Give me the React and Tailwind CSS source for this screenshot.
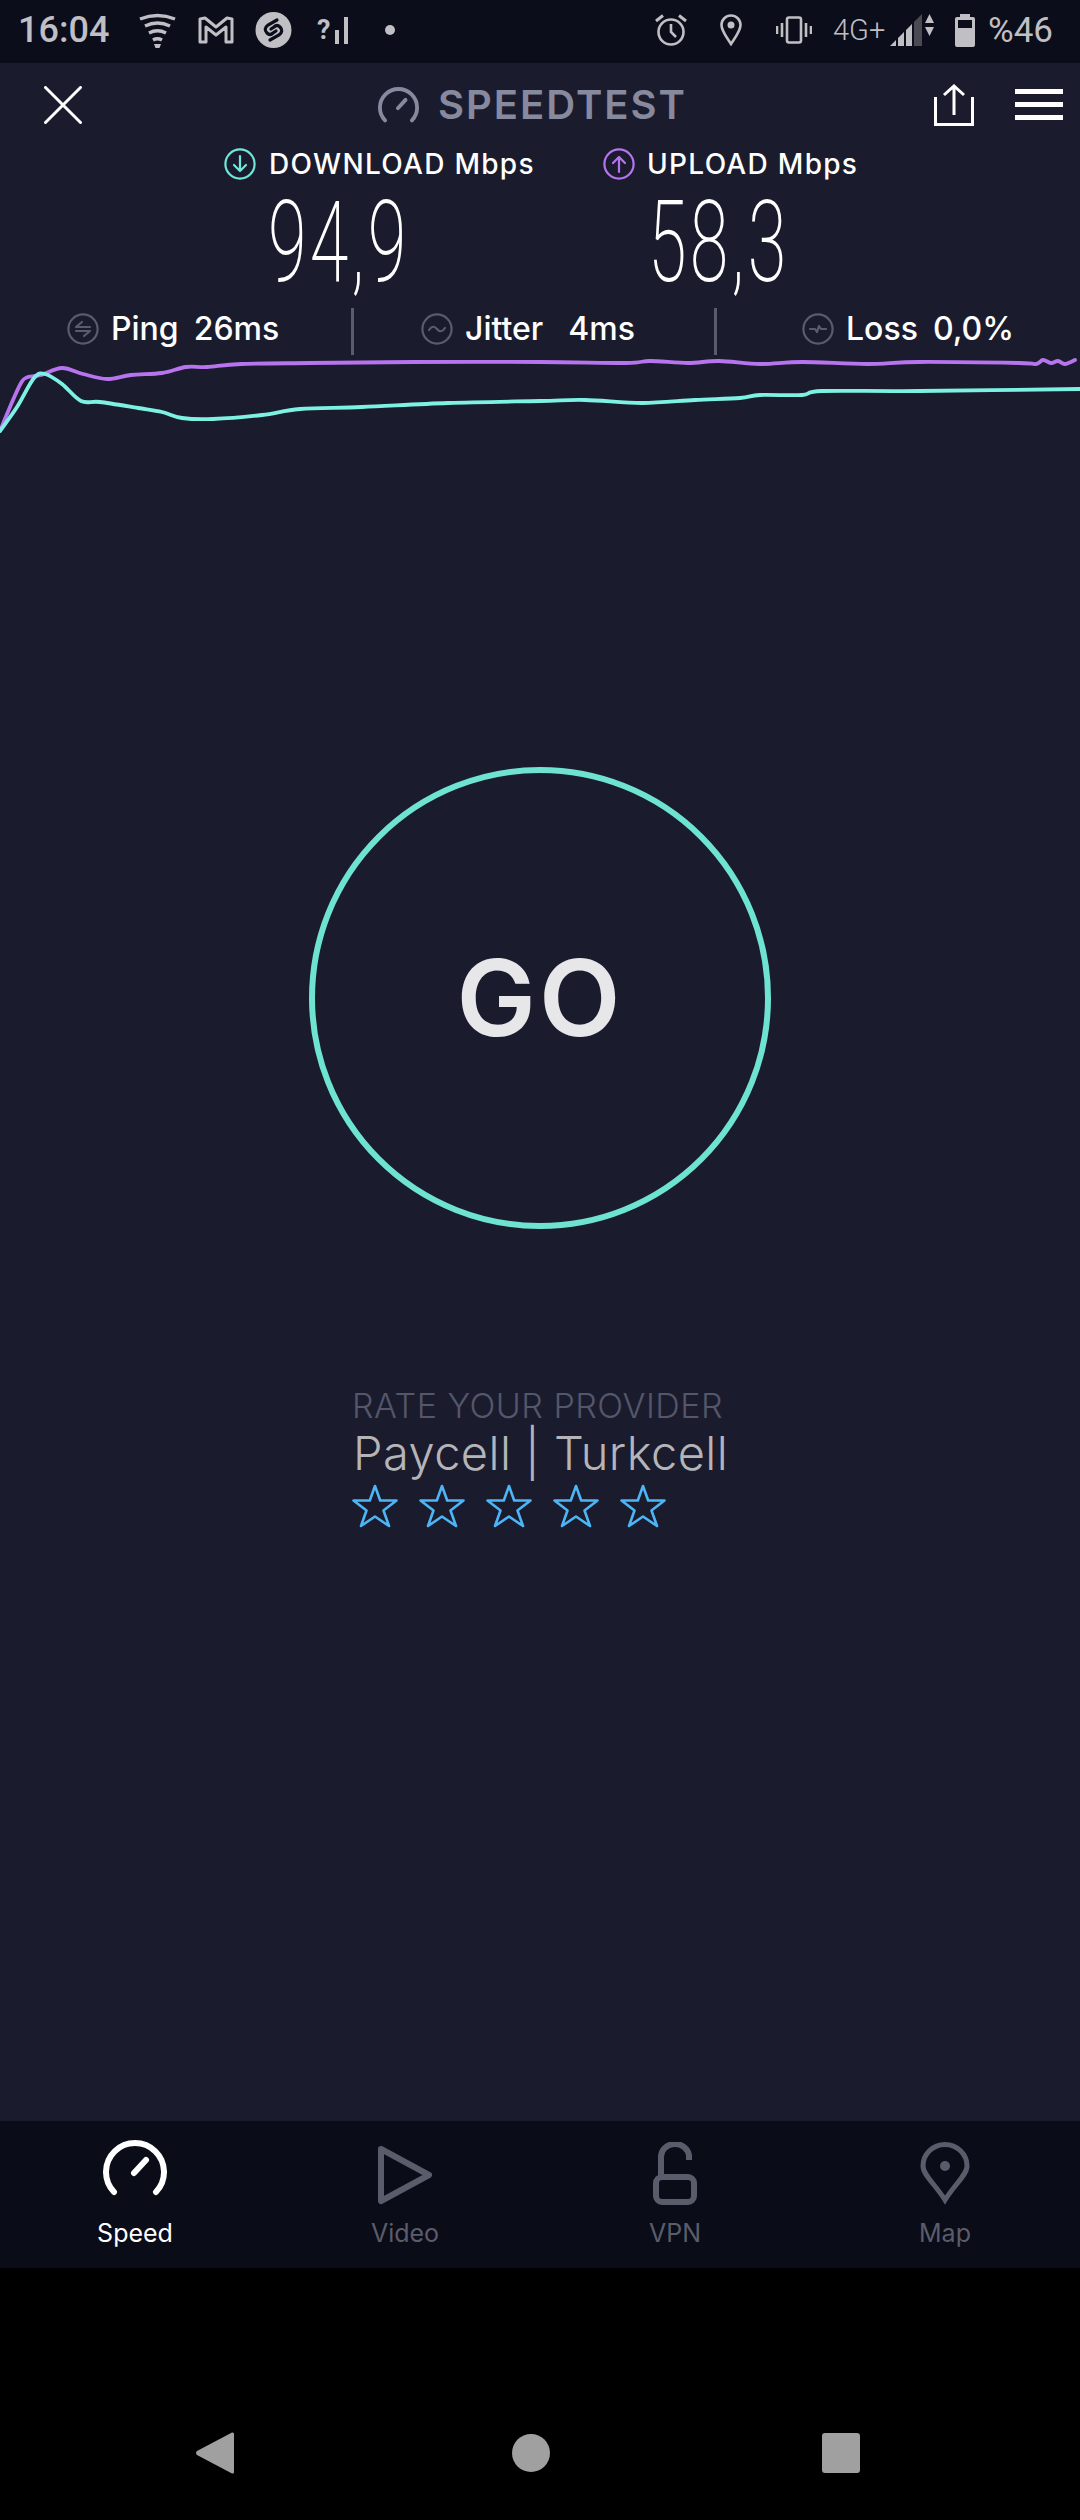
import React from 'react';

const purple = '0,431 10,407 21,383 28,377 41,375 62,368 83,374 107,379 131,375 162,373 186,367 207,367 241,364 310,363 413,362 540,362 626,363 650,361 688,363 719,361 760,364 802,362 867,364 919,362 1019,363 1036,364 1043,360 1051,363 1058,361 1065,364 1075,360';
const teal = '0,431 17,407 34,378 45,374 62,384 81,401 100,402 138,408 162,412 182,418 213,419 262,415 300,409 362,407 448,403 540,401 585,400 642,403 695,400 740,398 760,395 802,395 822,391 919,391 1080,389';

// catmull-rom through the points so the lines don't look angular
const smooth = str => {
  const p = str.split(' ').map(s => s.split(',').map(Number));
  let d = `M${p[0][0]} ${p[0][1]}`;
  for (let i = 0; i < p.length - 1; i++) {
    const a = p[i - 1] || p[i];
    const b = p[i];
    const c = p[i + 1];
    const e = p[i + 2] || c;
    d += ` C${b[0] + (c[0] - a[0]) / 6} ${b[1] + (c[1] - a[1]) / 6} ${c[0] - (e[0] - b[0]) / 6} ${c[1] - (e[1] - b[1]) / 6} ${c[0]} ${c[1]}`;
  }
  return d;
};

const Gauge = ({ className, stroke, width = 5 }) => (
  <svg viewBox="0 0 64 56" className={className} fill="none" stroke={stroke} strokeWidth={width} strokeLinecap="round">
    <path d="M11 52 A29 29 0 1 1 53 52" />
    <path d="M31 33 L43 20" />
  </svg>
);

const RoundIcon = ({ color, children }) => (
  <svg viewBox="0 0 32 32" className="w-[32px] h-[32px] shrink-0" fill="none" stroke={color} strokeWidth="2.2" strokeLinecap="round" strokeLinejoin="round">
    <circle cx="16" cy="16" r="14.6" />
    {children}
  </svg>
);

const Star = () => (
  <svg viewBox="0 0 48 44" className="w-[48px] h-[44px] shrink-0" fill="none" stroke="#4db5f5" strokeWidth="2.6" strokeLinejoin="round">
    <path d="M24 2 L29.2 16.5 L45.5 16.5 L32.5 26.5 L38 42 L24 32.5 L10 42 L15.5 26.5 L2.5 16.5 L18.8 16.5 Z" />
  </svg>
);

const StatusBar = () => (
  <div className="h-[63px] pb-[3px] bg-[#0b0d1a] flex items-center text-[#c0bfc4] font-['Roboto',sans-serif] shrink-0">
    <span className="ml-[18px] w-[92px] text-[36px] leading-none font-medium">16:04</span>
    <svg viewBox="0 0 37 35" className="ml-[29px] w-[37px] h-[35px]" fill="none" stroke="#c0bfc4" strokeWidth="3.4">
      <path d="M1 6 Q18.5 -1 36 6" />
      <path d="M6 13 Q18.5 7 31 13" />
      <path d="M10 20 Q18.5 15.500 27 20" />
      <path d="M14 27 Q18.5 24.500 23 27" />
      <path d="M15 31 L22 31 L20.500 35 L16.500 35 Z" fill="#c0bfc4" stroke="none" />
    </svg>
    <svg viewBox="0 0 36 28" className="ml-[22px] w-[36px] h-[28px]" fill="none" stroke="#c0bfc4" strokeWidth="3" strokeLinejoin="round">
      <path d="M2 3 L7 2 L18 11 L29 2 L34 3 L34 26 L28 26 L28 11 L18 19 L8 11 L8 26 L2 26 Z" />
    </svg>
    <svg viewBox="0 0 37 36" className="ml-[21px] w-[37px] h-[36px]">
      <circle cx="18.500" cy="18" r="18" fill="#c0bfc4" />
      <path d="M22 8 L13 13 Q8 17 12 21 Q15 24 18 21 L21 19 M15 28 L24 23 Q29 19 25 15 Q22 12 19 15 L16 17" fill="none" stroke="#0b0d1a" strokeWidth="3.2" strokeLinecap="round" />
    </svg>
    <div className="ml-[25px] w-[31px] h-[28px] flex items-end justify-between">
      <span className="text-[27px] leading-[28px] font-bold">?</span>
      <div className="w-[4px] h-[14px] bg-[#c0bfc4]" />
      <div className="w-[4px] h-[27px] bg-[#c0bfc4]" />
    </div>
    <div className="ml-[37px] w-[10px] h-[10px] rounded-full bg-[#c0bfc4]" />

    <svg viewBox="0 0 32 32" className="ml-[260px] w-[32px] h-[32px]" fill="none" stroke="#c0bfc4" strokeWidth="2.6">
      <circle cx="16" cy="18" r="12.500" />
      <path d="M16 10 L16 18 L21 23" />
      <path d="M1 7 L8 1.500 M31 7 L24 1.500" strokeWidth="3" />
    </svg>
    <svg viewBox="0 0 22 32" className="ml-[33px] w-[22px] h-[32px]" fill="none" stroke="#c0bfc4" strokeWidth="2.6">
      <path d="M11 30 C6 22 1.500 17 1.500 11 A9.500 9.500 0 0 1 20.500 11 C20.500 17 16 22 11 30 Z" />
      <circle cx="11" cy="11" r="3.500" fill="#c0bfc4" stroke="none" />
    </svg>
    <svg viewBox="0 0 36 28" className="ml-[34px] w-[36px] h-[28px]" fill="none" stroke="#c0bfc4" strokeWidth="2.600">
      <rect x="11" y="1.500" width="14" height="25" rx="2" />
      <path d="M6 7 L6 21 M30 7 L30 21" />
      <path d="M1 10 L1 18 M35 10 L35 18" />
    </svg>
    <span className="ml-[21px] w-[50px] text-[29px] leading-none font-light whitespace-nowrap">4G+</span>
    <svg viewBox="0 0 32 32" className="ml-[7px] w-[32px] h-[32px]" fill="#c0bfc4">
      <path d="M0 32 L6 26 L6 32 Z M8 32 L8 24 L14 18 L14 32 Z M16 32 L16 16 L22 10 L22 32 Z" />
      <path d="M24 32 L24 8 L32 0 L32 32 Z" fill="#4a4a52" />
    </svg>
    <svg viewBox="0 0 9 22" className="ml-[3px] w-[9px] h-[22px] self-start mt-[14px]" fill="#c0bfc4">
      <path d="M4.500 0 L9 9 L0 9 Z M0 13 L9 13 L4.500 22 Z" />
    </svg>
    <div className="ml-[21px] w-[20px] h-[33px] flex flex-col items-center">
      <div className="w-[10px] h-[3px] bg-[#c0bfc4]" />
      <div className="w-[20px] h-[30px] rounded-[2px] border-[3px] border-[#c0bfc4] flex flex-col justify-end">
        <div className="h-[16px] bg-[#c0bfc4]" />
      </div>
    </div>
    <span className="ml-[13px] text-[35px] leading-none font-normal">%46</span>
  </div>
);

const Header = () => (
  <div className="h-[83px] flex items-center shrink-0">
    <svg viewBox="0 0 38 38" className="ml-[44px] w-[38px] h-[38px]" fill="none" stroke="#ffffff" strokeWidth="3" strokeLinecap="round">
      <path d="M1.500 1.500 L36.500 36.500 M36.500 1.500 L1.500 36.500" />
    </svg>
    <Gauge className="ml-[296px] w-[41px] h-[36px]" stroke="#878a9e" width="6" />
    <span className="ml-[19px] w-[248px] text-[40px] leading-none font-semibold tracking-[2px] text-[#878a9e] whitespace-nowrap">SPEEDTEST</span>
    <svg viewBox="0 0 40 42" className="ml-[248px] w-[40px] h-[42px]" fill="none" stroke="#ffffff" strokeWidth="3">
      <path d="M1.500 13 L1.500 40.500 L38.500 40.500 L38.500 13" />
      <path d="M20 31 L20 2 M10 11 L20 2 L30 11" />
    </svg>
    <div className="ml-[41px] w-[48px] flex flex-col gap-[8px]">
      <div className="h-[5px] bg-white" />
      <div className="h-[5px] bg-white" />
      <div className="h-[5px] bg-white" />
    </div>
  </div>
);

const Results = () => (
  <div className="shrink-0">
    <div className="h-[36px] flex items-center text-white text-[28px] leading-none font-medium tracking-[1.3px] whitespace-nowrap">
      <div className="ml-[224px]">
        <RoundIcon color="#6fe8da"><path d="M16 8 L16 23 M10 17 L16 23 L22 17" /></RoundIcon>
      </div>
      <span className="ml-[13px] w-[267px]">DOWNLOAD Mbps</span>
      <div className="ml-[67px]">
        <RoundIcon color="#b774ee"><path d="M16 24 L16 9 M10 15 L16 9 L22 15" /></RoundIcon>
      </div>
      <span className="ml-[12px]">UPLOAD Mbps</span>
    </div>
    <div className="mt-[4px] h-[113px] flex items-center text-white font-['Roboto',sans-serif] font-extralight text-[113px] leading-none tracking-[5px]">
      <span className="ml-[268px] w-[380px] origin-left scale-x-[0.62] whitespace-nowrap">94,9</span>
      <span className="w-[300px] origin-left scale-x-[0.62] whitespace-nowrap">58,3</span>
    </div>
    <div className="mt-[9px] h-[47px] flex items-center text-white text-[32px] leading-none font-medium whitespace-nowrap">
      <div className="w-[354px] h-full flex items-center pl-[67px] pb-[5px] border-r-[3px] border-[#5b5c6b]">
        <RoundIcon color="#5b5c6b"><path d="M9 14 L15 9 M9 14 L23 14 M23 18 L17 23 M23 18 L9 18" /></RoundIcon>
        <span className="ml-[12px]">Ping</span>
        <span className="ml-[15px]">26ms</span>
      </div>
      <div className="w-[363px] h-full flex items-center pl-[67px] pb-[5px] border-r-[3px] border-[#5b5c6b]">
        <RoundIcon color="#5b5c6b"><path d="M8 17 Q12 11 16 16 Q20 21 24 15" /></RoundIcon>
        <span className="ml-[12px]">Jitter</span>
        <span className="ml-[25px]">4ms</span>
      </div>
      <div className="flex-1 h-full flex items-center pl-[85px] pb-[5px]">
        <RoundIcon color="#5b5c6b"><path d="M8 16 L13 16 L15 19 L17 13 L19 16 L24 16" /></RoundIcon>
        <span className="ml-[12px]">Loss</span>
        <span className="ml-[15px]">0,0%</span>
      </div>
    </div>
  </div>
);

const Chart = () => (
  <svg viewBox="0 355 1080 85" className="w-[1080px] h-[85px] shrink-0" fill="none" strokeWidth="3.800" strokeLinejoin="round" strokeLinecap="round">
    <path d={smooth(purple)} stroke="#b774ee" />
    <path d={smooth(teal)} stroke="#7df2e4" />
  </svg>
);

const navItems = [
  { label: 'Speed', active: true },
  { label: 'Video' },
  { label: 'VPN' },
  { label: 'Map' },
];

const NavIcon = ({ label }) => {
  if (label === 'Speed') return <Gauge className="w-[64px] h-[56px] mb-[9px]" stroke="#ffffff" width="6" />;
  if (label === 'Video') {
    return (
      <svg viewBox="0 0 56 60" className="w-[56px] h-[60px]" fill="none" stroke="#5b5c6b" strokeWidth="6" strokeLinejoin="round">
        <path d="M4 4 L52 30 L4 56 Z" />
      </svg>
    );
  }
  if (label === 'VPN') {
    return (
      <svg viewBox="0 0 44 63" className="w-[44px] h-[63px]" fill="none" stroke="#5b5c6b" strokeWidth="6">
        <path d="M8 33 L8 16 A14 13 0 0 1 36 14 L36 18" />
        <rect x="3" y="35" width="38" height="25" rx="6" />
      </svg>
    );
  }
  return (
    <svg viewBox="0 0 50 63" className="w-[50px] h-[63px]" fill="none" stroke="#5b5c6b" strokeWidth="5">
      <path d="M25 58 C15 42 3 33 3 24 A22 21.500 0 0 1 47 24 C47 33 35 42 25 58 Z" />
      <circle cx="25" cy="24" r="5" fill="#5b5c6b" stroke="none" />
    </svg>
  );
};

const BottomNav = () => (
  <div className="h-[147px] bg-[#0a0c17] grid grid-cols-4 shrink-0">
    {navItems.map(item => (
      <div key={item.label} className="flex flex-col items-center">
        <div className="h-[84px] flex items-end">
          <NavIcon label={item.label} />
        </div>
        <span className={`mt-[13px] text-[25px] leading-[30px] ${item.active ? 'text-white' : 'text-[#5b5c6b]'}`}>
          {item.label}
        </span>
      </div>
    ))}
  </div>
);

const SystemNav = () => (
  <div className="flex-1 bg-black flex items-start">
    <svg viewBox="0 0 38 42" className="ml-[196px] mt-[164px] w-[38px] h-[42px]" fill="#a0a0a0">
      <path d="M36 0.500 Q38 0 38 2 L38 40 Q38 42 36 41.500 L1 23 Q-1 21 1 19 Z" />
    </svg>
    <div className="ml-[278px] mt-[166px] w-[38px] h-[38px] rounded-full bg-[#a0a0a0]" />
    <div className="ml-[272px] mt-[165px] w-[38px] h-[40px] rounded-[3px] bg-[#a0a0a0]" />
  </div>
);

const App = () => {
  return (
    <div className="w-[1080px] h-[2520px] flex flex-col bg-[#1a1c2e] font-['Inter',sans-serif] overflow-hidden">
      <StatusBar />
      <Header />
      <Results />
      <Chart />

      {/* GO button */}
      <div className="mt-[327px] self-center w-[462px] h-[462px] rounded-full border-[6px] border-[#6fe3d2] flex items-center justify-center shrink-0">
        <span className="text-[106px] leading-none font-semibold tracking-[3px] text-[#e7e7ea]">GO</span>
      </div>

      {/* Rate your provider */}
      <div className="mt-[159px] ml-[351px] shrink-0">
        <p className="ml-[1px] text-[34px] leading-[36px] font-light tracking-[0.5px] text-[#55566a] whitespace-nowrap">RATE YOUR PROVIDER</p>
        <p className="ml-[2px] mt-[2px] text-[47px] leading-[54px] font-light tracking-[0.45px] text-[#b5b5b9] whitespace-nowrap">Paycell | Turkcell</p>
        <div className="mt-[4px] flex gap-[19px]">
          <Star /><Star /><Star /><Star /><Star />
        </div>
      </div>

      <div className="flex-1" />
      <BottomNav />
      <div className="h-[252px] flex shrink-0">
        <SystemNav />
      </div>
    </div>
  );
};

export default App;
